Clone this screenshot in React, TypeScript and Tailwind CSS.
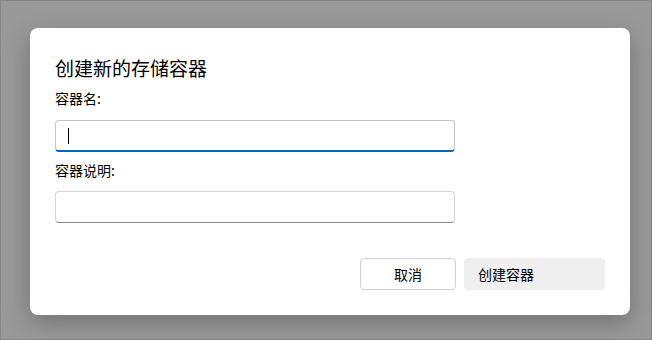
export default function App() {
  const font = {
    fontFamily: '"Noto Sans CJK SC", "Noto Sans", sans-serif',
  };
  return (
    <div
      className="w-[652px] h-[340px] bg-[#999999] border border-[#858585] pt-[27px] pl-[29px]"
      style={font}
    >
      <div className="flex flex-col w-[600px] h-[287px] rounded-[8px] bg-white shadow-[0_8px_24px_rgba(0,0,0,0.25)] pt-[26px] px-[25px] text-black">
        <h1 className="text-[19px] leading-[28px] font-normal">创建新的存储容器</h1>
        <label className="mt-[6px] text-[14px] leading-[20px]">容器名:</label>
        <div className="mt-[12px] flex items-center w-[400px] h-[32px] rounded-[4px] border border-[#c4c4c4] border-b-2 border-b-[#0067c0] pl-[12px]">
          <div className="w-px h-[16px] bg-black" />
        </div>
        <label className="mt-[8px] text-[14px] leading-[20px]">容器说明:</label>
        <div className="mt-[11px] w-[400px] h-[32px] rounded-[4px] border border-[#d4d4d4] border-b-[#8a8a8a]" />
        <div className="mt-[35px] flex justify-end gap-[8px]">
          <button className="w-[96px] h-[32px] rounded-[4px] border border-[#d0d0d0] bg-white text-[14px] text-black">
            取消
          </button>
          <button className="w-[141px] h-[32px] rounded-[4px] bg-[#efefef] text-[14px] text-black text-left pl-[14px]">
            创建容器
          </button>
        </div>
      </div>
    </div>
  );
}
